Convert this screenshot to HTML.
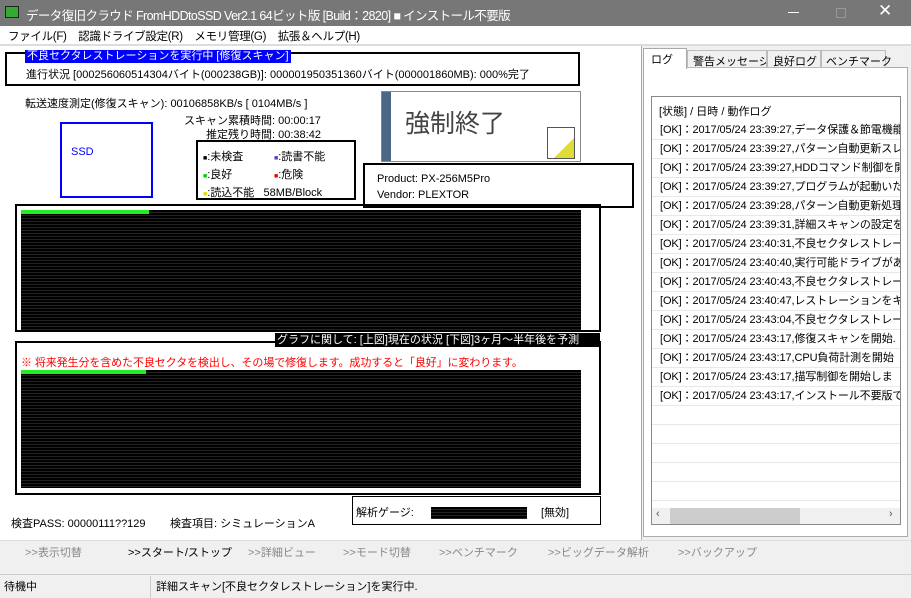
<!DOCTYPE html>
<html><head><meta charset="utf-8"><style>
*{margin:0;padding:0;box-sizing:border-box}
body{width:911px;height:598px;overflow:hidden;background:#fff;font-family:"Liberation Sans","Noto Sans CJK JP",sans-serif;font-size:11px;letter-spacing:0;color:#000;position:relative}
.a{position:absolute;white-space:nowrap}
.blk{background:repeating-linear-gradient(#000 0 2px,#222 2px 3px)}
.row{position:absolute;left:652px;width:248px;height:19px;border-bottom:1px solid #e8e8e8;padding-left:8px;line-height:18px;font-size:11px;letter-spacing:-0.1px;white-space:nowrap;overflow:hidden}
.btn{position:absolute;top:544px;color:#888;font-size:11px}
</style></head><body>
<div class="a" style="left:0;top:0;width:911px;height:26px;background:#777"></div>
<div class="a" style="left:5px;top:6px;width:14px;height:12px;background:#3a3;border:1px solid #222"></div>
<div class="a" style="left:26px;top:5px;color:#fff;font-size:12.5px;letter-spacing:-0.6px">データ復旧クラウド FromHDDtoSSD Ver2.1 64ビット版 [Build：2820] ■ インストール不要版</div>
<div class="a" style="left:788px;top:12px;width:11px;height:1px;background:#fff"></div>
<div class="a" style="left:836px;top:8px;width:10px;height:10px;border:1px solid #999"></div>
<div class="a" style="left:878px;top:1px;color:#fff;font-size:17px">✕</div>
<div class="a" style="left:8px;top:28px;font-size:11.5px;letter-spacing:-0.3px">ファイル(F)&nbsp;&nbsp;&nbsp;&nbsp;認識ドライブ設定(R)&nbsp;&nbsp;&nbsp;&nbsp;メモリ管理(G)&nbsp;&nbsp;&nbsp;&nbsp;拡張＆ヘルプ(H)</div>
<div class="a" style="left:0;top:44px;width:911px;height:2px;background:#ddd"></div>

<div class="a" style="left:5px;top:52px;width:575px;height:34px;border:2px solid #000"></div>
<div class="a" style="left:25px;top:50px;background:#0000ff;color:#fff;line-height:13px;padding:0 2px">不良セクタレストレーションを実行中 [修復スキャン]</div>
<div class="a" style="left:26px;top:66px;letter-spacing:0px">進行状況 [000256060514304バイト(000238GB)]: 000001950351360バイト(000001860MB): 000%完了</div>
<div class="a" style="left:25px;top:95px">転送速度測定(修復スキャン): 00106858KB/s [ 0104MB/s ]</div>
<div class="a" style="left:184px;top:112px">スキャン累積時間: 00:00:17</div>
<div class="a" style="left:206px;top:126px">推定残り時間: 00:38:42</div>
<div class="a" style="left:60px;top:122px;width:93px;height:76px;border:2px solid #0000ff;color:#0000ff;padding:22px 0 0 9px">SSD</div>
<div class="a" style="left:196px;top:140px;width:160px;height:60px;border:2px solid #000"></div>
<div class="a" style="left:203px;top:149px;line-height:16px"><span style="font-size:7px">■</span>:未検査<br><span style="color:#0c0;font-size:7px">■</span>:良好<br><span style="color:#dd0;font-size:7px">■</span>:読込不能&nbsp;&nbsp;&nbsp;58MB/Block</div>
<div class="a" style="left:274px;top:149px;line-height:16px"><span style="color:#63c;font-size:7px">■</span>:読書不能<br><span style="color:#e00;font-size:7px">■</span>:危険</div>
<div class="a" style="left:381px;top:91px;width:200px;height:71px;border:1px solid #888;background:#fff"></div>
<div class="a" style="left:382px;top:92px;width:9px;height:69px;background:#4a6785"></div>
<div class="a" style="left:405px;top:104px;font-size:25px;color:#444">強制終了</div>
<div class="a" style="left:547px;top:127px;width:28px;height:32px;border:1px solid #555;background:#fff;overflow:hidden"><div style="position:absolute;right:0;bottom:0;width:0;height:0;border-left:20px solid transparent;border-bottom:20px solid #dd3"></div></div>
<div class="a" style="left:363px;top:163px;width:271px;height:45px;border:2px solid #000;background:#fff;padding:6px 0 0 12px;line-height:16px;font-size:11px">Product: PX-256M5Pro<br>Vendor: PLEXTOR</div>

<div class="a" style="left:15px;top:204px;width:586px;height:128px;border:2px solid #000"></div>
<div class="a blk" style="left:21px;top:210px;width:560px;height:120px"></div>
<div class="a" style="left:21px;top:210px;width:128px;height:4px;background:#2e2"></div>
<div class="a" style="left:275px;top:333px;width:325px;height:14px;background:#000;color:#fff;font-size:11px;line-height:14px;padding-left:2px">グラフに関して: [上図]現在の状況 [下図]3ヶ月～半年後を予測</div>
<div class="a" style="left:15px;top:341px;width:586px;height:154px;border:2px solid #000;border-top:none"></div>
<div class="a" style="left:15px;top:341px;width:260px;height:2px;background:#000"></div>
<div class="a" style="left:21px;top:354px;color:#f00;letter-spacing:-0.1px">※ 将来発生分を含めた不良セクタを検出し、その場で修復します。成功すると「良好」に変わります。</div>
<div class="a blk" style="left:21px;top:370px;width:560px;height:118px"></div>
<div class="a" style="left:21px;top:370px;width:125px;height:4px;background:#2e2"></div>
<div class="a" style="left:352px;top:496px;width:249px;height:29px;border:1px solid #000;background:#fff"></div>
<div class="a" style="left:356px;top:504px">解析ゲージ:</div>
<div class="a blk" style="left:431px;top:507px;width:96px;height:12px"></div>
<div class="a" style="left:541px;top:504px">[無効]</div>
<div class="a" style="left:11px;top:515px">検査PASS: 00000111??129&nbsp;&nbsp;&nbsp;&nbsp;&nbsp;&nbsp;&nbsp;&nbsp;検査項目: シミュレーションA</div>

<div class="a" style="left:641px;top:46px;width:270px;height:494px;background:#f0f0f0;border-left:1px solid #aaa"></div>
<div class="a" style="left:643px;top:67px;width:265px;height:470px;background:#fff;border:1px solid #aaa"></div>
<div class="a" style="left:643px;top:48px;width:44px;height:21px;background:#fff;border:1px solid #aaa;border-bottom:none;padding:2px 0 0 7px">ログ</div>
<div class="a" style="left:687px;top:50px;width:80px;height:18px;background:#f0f0f0;border:1px solid #bbb;padding:2px 0 0 5px;overflow:hidden">警告メッセージ</div>
<div class="a" style="left:767px;top:50px;width:54px;height:18px;background:#f0f0f0;border:1px solid #bbb;padding:2px 0 0 5px">良好ログ</div>
<div class="a" style="left:821px;top:50px;width:65px;height:18px;background:#f0f0f0;border:1px solid #bbb;padding:2px 0 0 4px">ベンチマーク</div>
<div class="a" style="left:651px;top:96px;width:250px;height:429px;border:1px solid #888;background:#fff;overflow:hidden"></div>
<div class="a" style="left:659px;top:103px">[状態] / 日時 / 動作ログ</div>
<div class="row" style="top:121px">[OK]：2017/05/24 23:39:27,データ保護＆節電機能</div>
<div class="row" style="top:140px">[OK]：2017/05/24 23:39:27,パターン自動更新スレ</div>
<div class="row" style="top:159px">[OK]：2017/05/24 23:39:27,HDDコマンド制御を開</div>
<div class="row" style="top:178px">[OK]：2017/05/24 23:39:27,プログラムが起動いた</div>
<div class="row" style="top:197px">[OK]：2017/05/24 23:39:28,パターン自動更新処理</div>
<div class="row" style="top:216px">[OK]：2017/05/24 23:39:31,詳細スキャンの設定を</div>
<div class="row" style="top:235px">[OK]：2017/05/24 23:40:31,不良セクタレストレー</div>
<div class="row" style="top:254px">[OK]：2017/05/24 23:40:40,実行可能ドライブがあ</div>
<div class="row" style="top:273px">[OK]：2017/05/24 23:40:43,不良セクタレストレー</div>
<div class="row" style="top:292px">[OK]：2017/05/24 23:40:47,レストレーションをキャン</div>
<div class="row" style="top:311px">[OK]：2017/05/24 23:43:04,不良セクタレストレー</div>
<div class="row" style="top:330px">[OK]：2017/05/24 23:43:17,修復スキャンを開始.</div>
<div class="row" style="top:349px">[OK]：2017/05/24 23:43:17,CPU負荷計測を開始</div>
<div class="row" style="top:368px">[OK]：2017/05/24 23:43:17,描写制御を開始しま</div>
<div class="row" style="top:387px">[OK]：2017/05/24 23:43:17,インストール不要版で</div>
<div class="row" style="top:406px"></div><div class="row" style="top:425px"></div><div class="row" style="top:444px"></div><div class="row" style="top:463px"></div><div class="row" style="top:482px"></div>
<div class="a" style="left:652px;top:508px;width:248px;height:16px;background:#f0f0f0"></div>
<div class="a" style="left:670px;top:508px;width:130px;height:16px;background:#cdcdcd"></div>
<div class="a" style="left:656px;top:508px;font-size:11px;color:#555">‹</div>
<div class="a" style="left:889px;top:508px;font-size:11px;color:#555">›</div>

<div class="a" style="left:0;top:540px;width:911px;height:35px;background:#f0f0f0;border-top:1px solid #ddd"></div>
<div class="btn" style="left:25px">&gt;&gt;表示切替</div>
<div class="btn" style="left:128px;color:#000">&gt;&gt;スタート/ストップ</div>
<div class="btn" style="left:248px">&gt;&gt;詳細ビュー</div>
<div class="btn" style="left:343px">&gt;&gt;モード切替</div>
<div class="btn" style="left:439px">&gt;&gt;ベンチマーク</div>
<div class="btn" style="left:548px">&gt;&gt;ビッグデータ解析</div>
<div class="btn" style="left:678px">&gt;&gt;バックアップ</div>
<div class="a" style="left:0;top:574px;width:911px;height:24px;background:#f0f0f0;border-top:1px solid #ccc"></div>
<div class="a" style="left:150px;top:576px;width:1px;height:22px;background:#ccc"></div>
<div class="a" style="left:4px;top:578px">待機中</div>
<div class="a" style="left:156px;top:578px">詳細スキャン[不良セクタレストレーション]を実行中.</div>
</body></html>
